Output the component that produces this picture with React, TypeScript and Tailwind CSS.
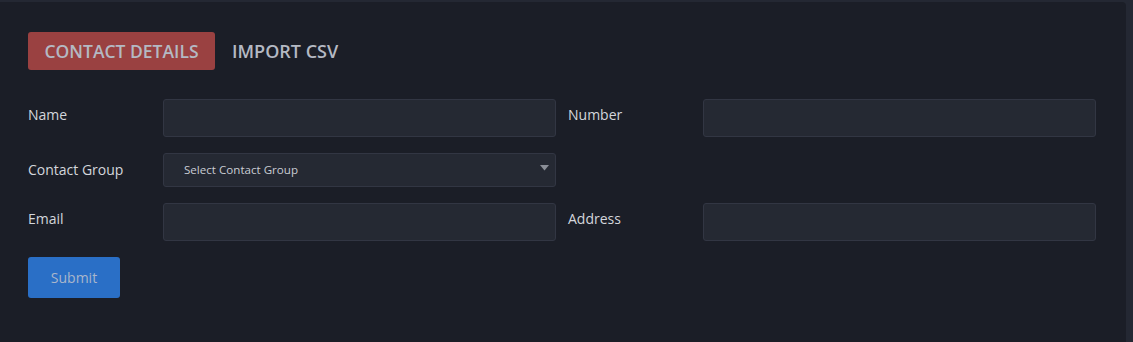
import React from "react";

const inputCls =
  "h-[38px] w-full rounded-[3px] border border-[#323643] bg-[#252933] outline-none";

export default function App() {
  return (
    <div
      className="h-[342px] w-[1133px] bg-[#242833] pt-[2px] pr-[7px]"
      style={{ fontFamily: '"Open Sans", "Noto Sans", sans-serif' }}
    >
      <div className="h-[340px] w-full rounded-tr-[4px] bg-[#1b1e27] pl-[28px] pr-[30px] pt-[30px]">
        <div className="flex items-center gap-[17px]">
          <div className="flex h-[38px] w-[187px] items-center justify-center rounded-[3px] bg-[#9a4141] text-[17.5px] font-semibold text-[#b4b9c3]">
            CONTACT DETAILS
          </div>
          <div className="text-[18px] font-semibold text-[#b4b9c3]">IMPORT CSV</div>
        </div>

        <div className="mt-[29px] grid grid-cols-[123px_393px_123px_393px] items-start gap-x-[12px] gap-y-[16px] text-[14px] leading-[20px] text-[#d3d6dc]">
          <div className="pt-[6px]">Name</div>
          <input className={inputCls} />
          <div className="pt-[6px]">Number</div>
          <input className={inputCls} />

          <div className="self-center">Contact Group</div>
          <div className="relative flex h-[34px] w-full items-center rounded-[3px] border border-[#323643] bg-[#252933] pl-[20px] text-[11.6px] text-[#c9ccd3]">
            Select Contact Group
            <svg
              className="absolute right-[6px] top-[11px]"
              width="9"
              height="6"
              viewBox="0 0 9 6"
            >
              <path d="M0 0 H9 L4.5 5.5 Z" fill="#8a8e97" />
            </svg>
          </div>
          <div />
          <div />

          <div className="pt-[6px]">Email</div>
          <input className={inputCls} />
          <div className="pt-[6px]">Address</div>
          <input className={inputCls} />
        </div>

        <button className="mt-[16px] flex h-[41px] w-[92px] items-center justify-center rounded-[3px] bg-[#2a6fc6] text-[14px] text-[#a9b6cb]">
          Submit
        </button>
      </div>
    </div>
  );
}
